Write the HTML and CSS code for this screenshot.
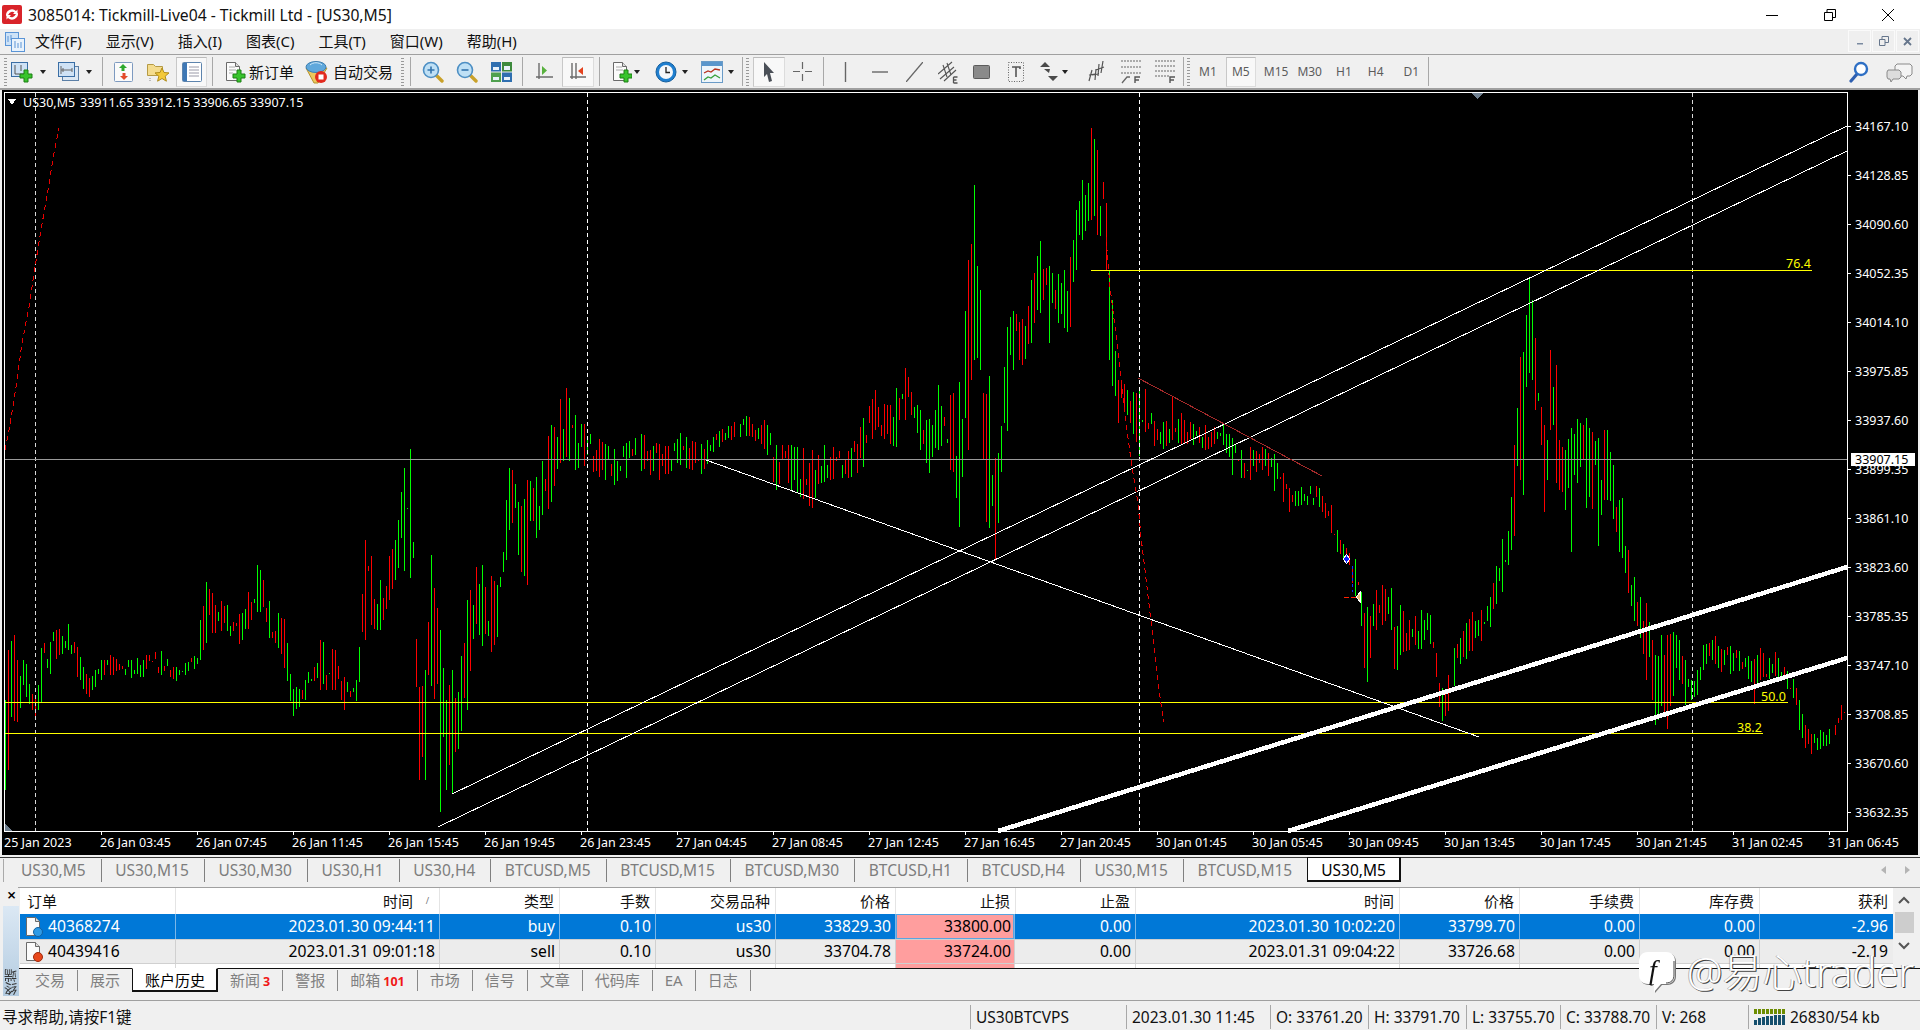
FILE: index.html
```html
<!DOCTYPE html>
<html lang="zh-CN">
<head>
<meta charset="utf-8">
<title>3085014: Tickmill-Live04 - Tickmill Ltd - [US30,M5]</title>
<link rel="stylesheet" href="styles.css">
</head>
<body>
<svg class="defs" width="0" height="0"><defs>
<g id="plus"><path d="M13 9h4v4h4v4h-4v4h-4v-4H9v-4h4z" fill="#38c42c" stroke="#1c7f14"/></g>
<g id="doc"><path d="M2.5 1.5h9l4 4v14h-13z" fill="#fbfbfb" stroke="#6a6a6a"/><path d="M11.5 1.5v4h4" fill="#ddd" stroke="#6a6a6a"/></g>
<g id="lens"><path d="M14 14l6 6" stroke="#c9a12a" stroke-width="3.4" stroke-linecap="round"/><circle cx="9" cy="9" r="7.5" fill="#bfe0f5" stroke="#4d8fc4" stroke-width="1.6"/></g>
</defs></svg>

<div class="app">
  <header class="title">
    <svg class="logo" width="20" height="19" viewBox="0 0 20 19"><rect width="20" height="19" rx="2" fill="#d9242a"/><path d="M4 11a6 6 0 0 1 10-5l1.500-1.500V9h-4.500l1.500-1.500a4 4 0 0 0-6 2zM16 8a6 6 0 0 1-10 5l-1.500 1.500V10H9l-1.500 1.500a4 4 0 0 0 6-2z" fill="#fff"/></svg>
    <span class="title-text">3085014: Tickmill-Live04 - Tickmill Ltd - [US30,M5]</span>
    <span class="win-btns">
      <svg width="12" height="12" viewBox="0 0 12 12"><path d="M0 6.500h12" stroke="#000"/></svg>
      <svg width="12" height="12" viewBox="0 0 12 12"><path d="M.5 3.500h8v8h-8zM3 3.500V.5h8.500v8H9" fill="none" stroke="#000"/></svg>
      <svg width="12" height="12" viewBox="0 0 12 12"><path d="M0 0l12 12M12 0L0 12" stroke="#000"/></svg>
    </span>
  </header>

  <nav class="menu">
    <svg class="mdi-ic" width="20" height="20" viewBox="0 0 20 20"><rect x=".5" y=".5" width="13" height="13" fill="#cde2f7" stroke="#5a94d6"/><rect x="6.500" y="6.500" width="13" height="13" fill="#e8f2fc" stroke="#5a94d6"/><path d="M3 4v6M6 3v5M10 9v7M13 11v5M16 10v6" stroke="#5a94d6"/></svg>
    <span class="menu-list">
      <span>文件(F)</span><span>显示(V)</span><span>插入(I)</span><span>图表(C)</span><span>工具(T)</span><span>窗口(W)</span><span>帮助(H)</span>
    </span>
    <span class="mdi-btns">
      <span class="mdi-btn"><svg width="8" height="8" viewBox="0 0 8 8"><path d="M1 6h6v1.500H1z" fill="#7a8aa0"/></svg></span>
      <span class="mdi-btn"><svg width="10" height="10" viewBox="0 0 10 10"><path d="M.5 3.500h5.500v6H.5zM3 3V.5h6.500v6H6" fill="none" stroke="#66768c"/></svg></span>
      <span class="mdi-btn"><svg width="9" height="9" viewBox="0 0 9 9"><path d="M1 1l7 7M8 1L1 8" stroke="#66768c" stroke-width="1.800"/></svg></span>
    </span>
  </nav>

  <div class="toolbar">
    <i class="grip m4"></i>
    <svg class="m4" width="22" height="22" viewBox="0 0 22 22"><rect x=".5" y="1.500" width="16" height="14" fill="#cfe2f5" stroke="#3a6ea5"/><path d="M4 4v9h10M10 4v6" fill="none" stroke="#555"/><use href="#plus"/></svg>
    <i class="drop m7"></i>
    <svg class="m12" width="22" height="22" viewBox="0 0 22 22"><rect x="4.500" y="5.500" width="16" height="14" fill="#dbe7f3" stroke="#5b7fa6"/><rect x=".5" y="1.500" width="16" height="14" fill="#cfe2f5" stroke="#3a6ea5"/><path d="M3 5v8M3 9h11M14 7v4M5 7v4" fill="none" stroke="#666"/></svg>
    <i class="drop m6"></i>
    <i class="vsep m10"></i>
    <svg class="m10" width="22" height="22" viewBox="0 0 22 22"><rect x="1.500" y="1.500" width="18" height="19" rx="1" fill="#fafafa" stroke="#7d9ac0"/><path d="M10 3l4 4h-2.500v3h-3V7H6z" fill="#2ea92e"/><path d="M11 19l-4-4h2.500v-3h3v3H15z" fill="#e24a2a"/></svg>
    <svg class="m11" width="23" height="22" viewBox="0 0 23 22"><path d="M1.500 3.500h6l2 2h7v9h-15z" fill="#f4dc8e" stroke="#b59a45"/><path d="M16 7l2 4.500 5 .4-3.800 3.300 1.200 5-4.400-2.700-4.400 2.700 1.200-5L9 11.900l5-.4z" fill="#f3c93a" stroke="#b08d1c"/><path d="M4 17v4" stroke="#888" stroke-dasharray="1 1"/></svg>
    <span class="pressed w31 m7"><svg width="20" height="22" viewBox="0 0 20 22"><rect x=".5" y="1.500" width="19" height="19" rx="1" fill="#fff" stroke="#5d84ad"/><rect x="1" y="2" width="4" height="18" fill="#3f78b5"/><path d="M7 6h10M7 9h10M7 12h10M7 15h10" stroke="#9a9aa8"/></svg></span>
    <i class="vsep m5"></i>
    <svg class="m11" width="22" height="22" viewBox="0 0 22 22"><use href="#doc"/><path d="M5 6h6M5 9h7M5 12h4" stroke="#aaa"/><use href="#plus"/></svg>
    <span class="tb-text tb-order">新订单</span>
    <svg class="m11" width="23" height="24" viewBox="0 0 23 24"><path d="M1 8l8 15h4l9-15z" fill="#ecc85c" stroke="#b59330"/><ellipse cx="11" cy="7" rx="10" ry="5.500" fill="#5fa8dc" stroke="#3f7fb0"/><path d="M5 5c3-3 9-3 12 0" stroke="#cfe8f8" fill="none"/><circle cx="16" cy="17" r="6" fill="#e22a1e"/><rect x="13.500" y="14.500" width="5" height="5" fill="#fff"/></svg>
    <span class="tb-text tb-auto">自动交易</span>
    <i class="grip m9"></i>
    <i class="vsep m6"></i>
    <svg class="m11" width="23" height="22" viewBox="0 0 23 22"><use href="#lens"/><path d="M5.500 9h7M9 5.500v7" stroke="#3474ad" stroke-width="1.600"/></svg>
    <svg class="m11" width="22" height="22" viewBox="0 0 22 22"><use href="#lens"/><path d="M5.500 9h7" stroke="#3474ad" stroke-width="1.600"/></svg>
    <svg class="m13" width="21" height="20" viewBox="0 0 21 20"><rect x="0" y="0" width="10" height="9.500" fill="#2f6fb0"/><rect x="11" y="0" width="10" height="9.500" fill="#3d8a3d"/><rect x="0" y="10.500" width="10" height="9.500" fill="#4fa04f"/><rect x="11" y="10.500" width="10" height="9.500" fill="#2f6fb0"/><path d="M2 5h6v3H2zM13 4h6v4h-6zM2 15h6v3H2zM13 15h6v3h-6z" fill="#e8f2fa"/></svg>
    <i class="vsep m10"></i>
    <svg class="m12" width="19" height="20" viewBox="0 0 19 20"><path d="M4 1v16M1 15h17" stroke="#6b6b6b" stroke-width="1.400" fill="none"/><path d="M7 4l5 4.500L7 13z" fill="#58b13e"/></svg>
    <span class="pressed w32 m8"><svg width="18" height="20" viewBox="0 0 18 20"><path d="M3 1v16M1 15h16M7 1v16" stroke="#6b6b6b" stroke-width="1.400" fill="none"/><path d="M14 5l-5 4 5 4z" fill="#e3421e"/></svg></span>
    <i class="vsep m5"></i>
    <svg class="m11" width="21" height="22" viewBox="0 0 21 22"><use href="#doc"/><path d="M5 6h6M5 9h7" stroke="#aaa"/><use href="#plus"/></svg>
    <i class="drop m2"></i>
    <svg class="m15" width="22" height="22" viewBox="0 0 22 22"><circle cx="11" cy="11" r="10" fill="#1f7fd0" stroke="#155f9e"/><circle cx="11" cy="11" r="7" fill="#f5f8fb"/><path d="M11 6v5.500h4" fill="none" stroke="#222" stroke-width="1.300"/></svg>
    <i class="drop m5"></i>
    <svg class="m13" width="22" height="22" viewBox="0 0 22 22"><rect x=".5" y=".5" width="21" height="21" fill="#eef5fb" stroke="#6a9bc7"/><rect x="1" y="1" width="20" height="4" fill="#5a96cc"/><path d="M3 12l4-2 3 1 4-3 5 1" fill="none" stroke="#b8321e" stroke-width="1.300"/><path d="M3 19l4-3 3 1 4-3 5 3" fill="none" stroke="#37a03a" stroke-width="1.300"/></svg>
    <i class="drop m5"></i>
    <i class="vsep m8"></i>
    <i class="grip m3"></i>
    <span class="pressed w32 m4"><svg width="12" height="22" viewBox="0 0 12 22"><path d="M1 1l10 11H7l2 8-3 1-2-8-3 3z" fill="#4a4f57"/></svg></span>
    <svg class="m8" width="19" height="19" viewBox="0 0 19 19"><path d="M9.500 0v7M9.500 12v7M0 9.500h7M12 9.500h7" stroke="#666" stroke-width="1.200"/></svg>
    <i class="vsep m11"></i>
    <svg class="m20" width="3" height="20" viewBox="0 0 3 20"><path d="M1.500 0v20" stroke="#666" stroke-width="1.400"/></svg>
    <svg class="m25" width="16" height="20" viewBox="0 0 16 20"><path d="M0 10h16" stroke="#666" stroke-width="1.400"/></svg>
    <svg class="m18" width="17" height="20" viewBox="0 0 17 20"><path d="M0 20L17 0" stroke="#666" stroke-width="1.400"/></svg>
    <svg class="m15" width="20" height="24" viewBox="0 0 20 24"><path d="M0 14L14 2M2 19L16 7M6 21L18 10M5 5l4 12M9 3l4 12" stroke="#555" stroke-width="1.100" fill="none"/><path d="M15.500 17h4M15.500 20h3M15.500 23h4M15.500 17v6" stroke="#555" stroke-width="1.300" fill="none"/></svg>
    <svg class="m15" width="17" height="14" viewBox="0 0 17 14"><rect x=".5" y=".5" width="16" height="13" rx="1" fill="#8a8a8a" stroke="#5c5c5c"/></svg>
    <svg class="m18" width="16" height="20" viewBox="0 0 16 20"><rect x=".5" y=".5" width="15" height="19" fill="none" stroke="#666" stroke-dasharray="1 1.500"/><path d="M4 5h8v2M8 5v10" fill="none" stroke="#555" stroke-width="1.600"/></svg>
    <svg class="m16" width="18" height="20" viewBox="0 0 18 20"><path d="M5 0l5 5H0zM4 7l5 4 1-4M13 19l-5-5h10z" fill="#4a4a4a"/></svg>
    <i class="drop m4"></i>
    <svg class="m20" width="17" height="22" viewBox="0 0 17 22"><path d="M1 20L4 9M1 14l6-1M7 19l1-11M4 14l7-1M10 15l1-12M8 9l8-3M13 12l2-12" stroke="#555" stroke-width="1.200" fill="none"/></svg>
    <svg class="m16" width="20" height="24" viewBox="0 0 20 24"><path d="M0 1h20M0 7h20M0 13h20" stroke="#666" stroke-dasharray="2 1"/><path d="M1 23l5-6h3" stroke="#666" fill="none" stroke-width="1.300"/><path d="M14 23v-6h5M14 20h4" stroke="#555" fill="none" stroke-width="1.400"/></svg>
    <svg class="m14" width="20" height="24" viewBox="0 0 20 24"><path d="M0 1h20M0 6h20M0 11h20M0 16h14" stroke="#666" stroke-dasharray="2 1"/><path d="M15 23v-6h5M15 20h4" stroke="#555" fill="none" stroke-width="1.400"/></svg>
    <i class="vsep m8"></i>
    <i class="grip m3"></i>
    <span class="period m9">M1</span>
    <span class="pressed period w30 m9">M5</span>
    <span class="period m8">M15</span>
    <span class="period m9">M30</span>
    <span class="period m14">H1</span>
    <span class="period m16">H4</span>
    <span class="period m20">D1</span>
    <i class="vsep m9"></i>
    <span class="tb-right">
      <svg width="20" height="22" viewBox="0 0 20 22"><path d="M8 13l-6 7" stroke="#2e5fb0" stroke-width="3.200" stroke-linecap="round"/><circle cx="12" cy="8" r="6" fill="#fff" stroke="#2e6fc4" stroke-width="2.400"/></svg>
      <svg width="27" height="22" viewBox="0 0 27 22"><path d="M11 3h13l2 2v8l-2 2h-3l-1 3-3-3h-6l-2-2V5z" fill="#f4f4f4" stroke="#8a8a8a"/><path d="M2 9h11l2 2v5l-2 2H7l-2 3-1-3H2l-1-2v-5z" fill="#ddd" stroke="#8a8a8a"/></svg>
    </span>
  </div>

  <main class="chart">
    <svg class="chart-svg" width="1920" height="765" viewBox="0 90 1920 765">
      <path id="bars-up" class="bar-up"/>
      <path id="bars-down" class="bar-down"/>
      <path class="vgrid thin" d="M35.500 93V831M1692.500 93V831"/>
      <path class="vgrid" d="M587.500 93V831M1139.500 93V831"/>
      <path class="price-line" d="M4 459.500H1847"/>
      <path class="fib" d="M1091 270.500H1812M4 702.500H1788M4 733.500H1763"/>
      <path class="thin-line" d="M452 794L1847 126M438 827L1847 151M706 460L1479 737"/>
      <path class="thick-line" d="M998 831L1847 567M1288 831L1847 658"/>
      <path class="dim-red" d="M1138 378L1322 476"/>
      <path class="red-dash" d="M5 450L9.600 427 16 387 22 343 29 307 35 267 41 230 48 190 54 153 59 128"/>
      <path class="red-dash" d="M1106 237L1110 287 1115 327 1119 360 1126.500 427 1132 467 1138 503 1141 537 1147 587 1154 647 1160 697 1163.500 722"/>
      <path class="blue-dash" d="M1352.500 566V592"/>
      <path class="red-short" d="M1344 597.500H1357"/>
      <path class="mark-blue" d="M1343 559l3.500-4.500 3.500 4.500-3.500 4.500z"/>
      <path class="mark-orange" d="M1356 597l4.500-5v10z"/>
      <path class="frame" d="M4.500 92.500H1847.500V831.500H4.500Z"/>
      <path class="ticks" d="M1847 126h4M1847 175h4M1847 224h4M1847 273h4M1847 322h4M1847 371h4M1847 420h4M1847 469h4M1847 518h4M1847 567h4M1847 616h4M1847 665h4M1847 714h4M1847 763h4M1847 812h4M101.500 831v4M197.500 831v4M293.500 831v4M389.500 831v4M485.500 831v4M581.500 831v4M677.500 831v4M773.500 831v4M869.500 831v4M965.500 831v4M1061.500 831v4M1157.500 831v4M1253.500 831v4M1349.500 831v4M1445.500 831v4M1541.500 831v4M1637.500 831v4M1733.500 831v4M1829.500 831v4"/>
      <path class="tri-top" d="M1472 93h11l-5.500 6z"/>
      <path class="tri-left" d="M5 823l7 8H5z"/>
      <path class="legend-tri" d="M8 99h8l-4 6z"/>
      <text class="axis" x="23" y="106.500">US30,M5</text>
      <text class="axis" x="80" y="106.500">33911.65 33912.15 33906.65 33907.15</text>
      <text class="fib-text" x="1786" y="268">76.4</text>
      <text class="fib-text" x="1761" y="701">50.0</text>
      <text class="fib-text" x="1737" y="732">38.2</text>
      <g class="axis">
        <text x="1855" y="130.500">34167.10</text><text x="1855" y="179.500">34128.85</text><text x="1855" y="228.500">34090.60</text><text x="1855" y="277.500">34052.35</text><text x="1855" y="326.500">34014.10</text><text x="1855" y="375.500">33975.85</text><text x="1855" y="424.500">33937.60</text><text x="1855" y="473.500">33899.35</text><text x="1855" y="522.500">33861.10</text><text x="1855" y="571.500">33823.60</text><text x="1855" y="620.500">33785.35</text><text x="1855" y="669.500">33747.10</text><text x="1855" y="718.500">33708.85</text><text x="1855" y="767.500">33670.60</text><text x="1855" y="816.500">33632.35</text>
      </g>
      <rect class="cur-box" x="1851" y="453" width="64" height="13"/>
      <text class="axis cur-text" x="1855" y="464">33907.15</text>
      <g class="axis">
        <text x="4" y="847">25 Jan 2023</text><text x="100" y="847">26 Jan 03:45</text><text x="196" y="847">26 Jan 07:45</text><text x="292" y="847">26 Jan 11:45</text><text x="388" y="847">26 Jan 15:45</text><text x="484" y="847">26 Jan 19:45</text><text x="580" y="847">26 Jan 23:45</text><text x="676" y="847">27 Jan 04:45</text><text x="772" y="847">27 Jan 08:45</text><text x="868" y="847">27 Jan 12:45</text><text x="964" y="847">27 Jan 16:45</text><text x="1060" y="847">27 Jan 20:45</text><text x="1156" y="847">30 Jan 01:45</text><text x="1252" y="847">30 Jan 05:45</text><text x="1348" y="847">30 Jan 09:45</text><text x="1444" y="847">30 Jan 13:45</text><text x="1540" y="847">30 Jan 17:45</text><text x="1636" y="847">30 Jan 21:45</text><text x="1732" y="847">31 Jan 02:45</text><text x="1828" y="847">31 Jan 06:45</text>
      </g>
    </svg>
  </main>

  <div class="chart-tabs">
    <span class="ctab first">US30,M5</span><span class="ctab">US30,M15</span><span class="ctab">US30,M30</span><span class="ctab">US30,H1</span><span class="ctab">US30,H4</span><span class="ctab">BTCUSD,M5</span><span class="ctab">BTCUSD,M15</span><span class="ctab">BTCUSD,M30</span><span class="ctab">BTCUSD,H1</span><span class="ctab">BTCUSD,H4</span><span class="ctab">US30,M15</span><span class="ctab no-sep">BTCUSD,M15</span><span class="ctab active">US30,M5</span>
    <span class="tab-nav"><i class="nav-l"></i><i class="nav-r"></i></span>
  </div>

  <section class="terminal">
    <aside class="term-side">
      <span class="term-close">×</span>
      <span class="term-label"><span>终端</span></span>
    </aside>
    <div class="term-main">
      <div class="term-top">
        <div class="grid-wrap">
          <div class="row head">
            <span class="left">订单</span><span class="sort">时间<small>/</small></span><span>类型</span><span>手数</span><span>交易品种</span><span>价格</span><span>止损</span><span>止盈</span><span>时间</span><span>价格</span><span>手续费</span><span>库存费</span><span class="last">获利</span>
          </div>
          <div class="row sel">
            <span class="left order"><svg width="19" height="21" viewBox="0 0 19 21"><use href="#doc"/><circle cx="14" cy="16" r="4.500" fill="#2e9be6" stroke="#14609e"/></svg>40368274</span><span>2023.01.30 09:44:11</span><span>buy</span><span>0.10</span><span>us30</span><span>33829.30</span><span class="sl">33800.00</span><span>0.00</span><span>2023.01.30 10:02:20</span><span>33799.70</span><span>0.00</span><span>0.00</span><span class="last">-2.96</span>
          </div>
          <div class="row alt">
            <span class="left order"><svg width="19" height="21" viewBox="0 0 19 21"><use href="#doc"/><circle cx="14" cy="16" r="4.500" fill="#e8481c" stroke="#a02a0c"/></svg>40439416</span><span>2023.01.31 09:01:18</span><span>sell</span><span>0.10</span><span>us30</span><span>33704.78</span><span class="sl">33724.00</span><span>0.00</span><span>2023.01.31 09:04:22</span><span>33726.68</span><span>0.00</span><span>0.00</span><span class="last">-2.19</span>
          </div>
          <div class="row stub">
            <span></span><span></span><span></span><span></span><span></span><span></span><span class="sl"></span><span></span><span></span><span></span><span></span><span></span><span class="last"></span>
          </div>
        </div>
        <div class="scroll">
          <svg width="14" height="9" viewBox="0 0 14 9"><path d="M2 7l5-5 5 5" fill="none" stroke="#555" stroke-width="2"/></svg>
          <i class="thumb"></i>
          <svg width="14" height="9" viewBox="0 0 14 9"><path d="M2 2l5 5 5-5" fill="none" stroke="#555" stroke-width="2"/></svg>
        </div>
      </div>
      <div class="term-tabs">
        <span class="ttab first">交易</span><span class="ttab no-sep">展示</span><span class="ttab active">账户历史</span><span class="ttab">新闻<b>3</b></span><span class="ttab">警报</span><span class="ttab">邮箱<b>101</b></span><span class="ttab">市场</span><span class="ttab">信号</span><span class="ttab">文章</span><span class="ttab">代码库</span><span class="ttab">EA</span><span class="ttab">日志</span>
      </div>
    </div>
  </section>

  <footer class="status">
    <span class="st s1">寻求帮助,请按F1键</span>
    <span class="st s2">US30BTCVPS</span>
    <span class="st s3">2023.01.30 11:45</span>
    <span class="st s4">O: 33761.20</span>
    <span class="st s5">H: 33791.70</span>
    <span class="st s6">L: 33755.70</span>
    <span class="st s7">C: 33788.70</span>
    <span class="st s8">V: 268</span>
    <span class="st s9"><svg width="32" height="17" viewBox="0 0 32 17"><path d="M1.500 6V1M5.500 6V1M9.500 6V1M13.500 6V1M17.500 6V1M21.500 6V1M25.500 6V1M29.500 6V1" stroke="#6c8c00" stroke-width="3"/><path d="M1.500 17V12M5.500 17V10M9.500 17V9M13.500 17V8M17.500 17V8M21.500 17V7M25.500 17V7M29.500 17V7" stroke="#16506e" stroke-width="3"/></svg>26830/54 kb</span>
  </footer>

  <div class="watermark">
    <svg class="wm-logo" width="38" height="42" viewBox="0 0 38 42"><path d="M10 1h18c6 0 9 4 9 9v14c0 6-4 9-9 9h-5l-7 8v-8h-6C4 33 1 29 1 24V10C1 5 4 1 10 1z" fill="#fff"/><path d="M36 10v14c0 5-3 8-8 8" fill="none" stroke="#444"/><text class="wm-f" x="11" y="28">f</text></svg>
    <span class="wm-text">@易心trader</span>
  </div>
</div>
<script src="chart.js"></script>
</body>
</html>
```
FILE: styles.css
```css
* { box-sizing: border-box; }
html, body { margin: 0; padding: 0; }
body {
  width: 1920px; height: 1030px; overflow: hidden; background: #f0f0f0; color: #000;
  font-family: "Noto Sans", "Noto Sans CJK SC", sans-serif; font-size: 15px;
}
.defs { position: absolute; }
.app { position: relative; width: 1920px; height: 1030px; display: flex; flex-direction: column; }
svg { display: block; flex: none; }

/* title */
.title { height: 29px; background: #fff; display: flex; align-items: center; padding-left: 2px; }
.title-text { margin-left: 6px; font-size: 15.700px; color: #111; }
.win-btns { margin-left: auto; display: flex; gap: 46px; padding-right: 26px; }

/* menu */
.menu { height: 26px; background: #efefef; border-bottom: 1px solid #a0a0a0; display: flex; align-items: center; padding-left: 5px; }
.mdi-ic { margin-top: 1px; }
.menu-list { margin-left: 10px; margin-top: -3px; display: flex; gap: 24px; font-size: 15px; color: #111; }
.mdi-btns { margin-left: auto; display: flex; gap: 1px; padding-right: 1px; align-self: flex-start; margin-top: 1px; }
.mdi-btn { width: 23px; height: 22px; border: 1px solid #fafafa; display: flex; align-items: center; justify-content: center; }

/* toolbar */
.toolbar { height: 35px; background: #f0f0f0; border-bottom: 2px solid #a0a0a0; display: flex; align-items: center; }
.toolbar > * { flex: none; }
.grip { width: 3px; height: 28px; background: repeating-linear-gradient(#999 0 1px, transparent 1px 3px); display: block; }
.vsep { width: 1px; height: 29px; background: #a8a8a8; display: block; }
.drop { width: 0; height: 0; border-left: 3.500px solid transparent; border-right: 3.500px solid transparent; border-top: 4px solid #222; display: block; }
.pressed { height: 30px; background: #f8f8f8; border: 1px solid #dcdcdc; border-top-color: #bbb; border-left-color: #c8c8c8; display: flex; align-items: center; justify-content: center; }
.w30 { width: 30px; } .w31 { width: 31px; } .w32 { width: 32px; }
.m2 { margin-left: 2px; } .m3 { margin-left: 3px; } .m4 { margin-left: 4px; } .m5 { margin-left: 5px; } .m6 { margin-left: 6px; }
.m7 { margin-left: 7px; } .m8 { margin-left: 8px; } .m9 { margin-left: 9px; } .m10 { margin-left: 10px; } .m11 { margin-left: 11px; }
.m12 { margin-left: 12px; } .m13 { margin-left: 13px; } .m14 { margin-left: 14px; } .m15 { margin-left: 15px; } .m16 { margin-left: 16px; }
.m18 { margin-left: 18px; } .m19 { margin-left: 19px; } .m20 { margin-left: 20px; } .m25 { margin-left: 25px; }
.tb-text { font-size: 15px; color: #111; white-space: nowrap; }
.tb-order { margin-left: 3px; width: 45px; }
.tb-auto { margin-left: 5px; width: 59px; }
.period { font-size: 12px; color: #5c5c5c; }
.tb-right { margin-left: auto; display: flex; gap: 17px; padding-right: 7px; }

/* chart */
.chart { height: 765px; background: #000; margin-left: 2px; margin-right: 2px; overflow: hidden; }
.chart-svg { margin-left: -2px; }
.chart-svg path { fill: none; shape-rendering: crispEdges; }
.bar-up { stroke: #00ff00; stroke-width: 1; }
.bar-down { stroke: #ff0000; stroke-width: 1; }
.vgrid { stroke: #fff; stroke-dasharray: 4 3; }
.vgrid.thin { stroke: #d8d8d8; }
.price-line { stroke: #9a9a9a; }
.fib { stroke: #ffff00; }
.thin-line { stroke: #fff; }
.thick-line { stroke: #fff; stroke-width: 4.500; }
.dim-red { stroke: #a52a2a; }
.red-dash { stroke: #e80000; stroke-dasharray: 5 4; }
.blue-dash { stroke: #1030ff; stroke-dasharray: 3 3; }
.red-short { stroke: #ff2000; stroke-dasharray: 5 2; }
.chart-svg .mark-blue { fill: #1020ff; stroke: #fff; }
.chart-svg .mark-orange { fill: #f0c080; stroke: #fff; }
.frame { stroke: #fff; }
.ticks { stroke: #fff; }
.chart-svg .tri-top { fill: #708090; }
.chart-svg .tri-left { fill: #708090; }
.chart-svg .legend-tri { fill: #fff; }
.axis { fill: #fff; font-size: 12.500px; font-family: "Noto Sans", sans-serif; }
.fib-text { fill: #ffff00; font-size: 12.500px; font-family: "Noto Sans", sans-serif; }
.cur-box { fill: #fff; }
.axis.cur-text { fill: #000; }

/* chart tabs */
.chart-tabs { height: 30px; margin-top: 2px; border-top: 1px solid #3a3a3a; display: flex; align-items: flex-start; padding-left: 3px; }
.ctab { height: 23px; margin-top: 1px; padding: 0 15px 0 13.600px; font-size: 15.500px; line-height: 23px; color: #7d7d7d; border-right: 1px solid #808080; white-space: nowrap; }
.ctab.first { padding-left: 17px; border-left: 1px solid #aaa; }
.ctab.no-sep { border-right: 0; }
.ctab.active { background: #fff; color: #000; margin-top: -1px; height: 25px; border: 1px solid #111; border-top-color: #111; border-right-width: 2px; border-bottom-width: 2px; padding: 0 13px; line-height: 24px; }
.tab-nav { margin-left: auto; display: flex; gap: 19px; padding: 8px 10px 0 0; }
.nav-l, .nav-r { width: 0; height: 0; border-top: 4px solid transparent; border-bottom: 4px solid transparent; display: block; }
.nav-l { border-right: 5px solid #b4b4b4; }
.nav-r { border-left: 5px solid #b4b4b4; }

/* terminal */
.terminal { height: 114px; display: flex; border-bottom: 1px solid #a0a0a0; }
.term-side { width: 20px; padding-left: 3px; display: flex; flex-direction: column; }
.term-close { height: 18px; text-align: center; font-size: 16px; line-height: 14px; margin-top: 1px; font-weight: 600; }
.term-label { flex: none; height: 90px; width: 16px; background: linear-gradient(#dbe8f4, #b3cbe0); display: flex; align-items: flex-end; justify-content: center; }
.term-label span { writing-mode: vertical-rl; transform: rotate(180deg); font-size: 13px; line-height: 15px; color: #333; margin-bottom: 1px; }
.term-main { flex: 1; min-width: 0; display: flex; flex-direction: column; }
.term-top { height: 81px; display: flex; border-top: 1px solid #a0a0a0; margin-left: -2px; padding-left: 2px; overflow: hidden; }
.grid-wrap { width: 1873px; flex: none; background: #fff; }
.row { display: grid; grid-template-columns: 156px 264px 120px 96px 120px 120px 120px 120px 264px 120px 120px 120px 133px; font-size: 15.700px; }
.row > span { text-align: right; padding-right: 4px; white-space: nowrap; border-right: 1px solid #d8d8d8; line-height: 25px; height: 100%; }
.row > .left { text-align: left; }
.row > .last { padding-right: 5px; border-right: 0; }
.head { height: 26px; }
.head > span { font-size: 15px; line-height: 26px; padding-right: 5px; border-right-color: #e4e4e4; color: #111; }
.head > .left { padding-left: 7px; }
.head > .sort { padding-right: 26px; position: relative; }
.sort small { position: absolute; right: 10px; top: 0; font-size: 9px; color: #777; }
.row.sel { height: 25px; background: #0078d7; color: #fff; }
.row.sel > span { border-right-color: #7ab6e8; }
.row.alt { height: 25px; background: #ececec; border-top: 1px solid #d0d0d0; border-bottom: 1px solid #d0d0d0; }
.row.alt > span { line-height: 23px; border-right-color: #d0d0d0; }
.row.stub { height: 5px; }
.row .sl { background: #ff9e9e; color: #000; margin-right: 1px; padding-right: 3px; }
.row.sel .sl { box-shadow: inset 0 0 0 1px #5aa5e0; }
.order { display: flex; align-items: center; gap: 5px; padding-left: 4px; }
.scroll { width: 26px; flex: none; display: flex; flex-direction: column; align-items: center; padding-top: 8px; padding-right: 4px; }
.thumb { display: block; width: 19px; height: 21px; background: #cdcdcd; margin: 7px 0 8px; }
.term-tabs { height: 26px; flex: none; border-top: 1px solid #111; display: flex; align-items: flex-start; margin-left: -1px; }
.ttab { height: 21px; margin-top: 1px; padding: 0 12px; font-size: 15px; line-height: 21px; color: #808080; border-right: 1px solid #888; white-space: nowrap; }
.ttab.first { padding-left: 16px; }
.ttab.no-sep { border-right: 0; }
.ttab.active { background: #fff; color: #000; height: 24px; margin-top: -1px; padding: 0 12px; border: 1px solid #111; border-top-color: transparent; border-right-width: 2px; border-bottom-width: 2px; line-height: 22px; width: 86px; }
.ttab b { color: #f01818; font-size: 12.500px; margin-left: 3px; font-weight: 700; }

/* status */
.status { flex: 1; background: #f0f0f0; display: flex; align-items: center; padding-top: 2px; font-size: 15.500px; }
.st { height: 24px; line-height: 24px; white-space: nowrap; padding-left: 5px; border-left: 1px solid #a8a8a8; color: #111; display: flex; align-items: center; flex: none; }
.s1 { width: 970px; border-left: 0; padding-left: 2px; }
.s2 { width: 156px; }
.s3 { width: 144px; }
.s4 { width: 98px; }
.s5 { width: 98px; }
.s6 { width: 94px; }
.s7 { width: 96px; }
.s8 { width: 92px; }
.s9 { gap: 4px; flex: 1; }

/* watermark */
.watermark { position: absolute; left: 1638px; top: 950px; display: flex; align-items: center; gap: 11px; pointer-events: none; }
.wm-logo { filter: drop-shadow(1px 1px 0 #777); }
.wm-f { fill: #111; font: italic 400 28px "Liberation Serif", serif; }
.wm-text { font-family: "Noto Sans", "Noto Sans CJK SC", sans-serif; font-weight: 300; font-size: 40px; line-height: 44px; color: #fff; text-shadow: 1px 1px 0 #444, -1px 0 0 rgba(120,120,120,.5); white-space: nowrap; }
```
FILE: chart.js
```js
(function () {
  // Price history envelope: [x, high-y, low-y] in page pixels.
  var keys = [
  [5,700,790],[8,650,770],[13,627,720],[17,660,722],[25,660,695],[35,695,718],[42,640,700],[55,630,660],[68,624,650],[78,650,680],[88,680,698],[100,660,680],[110,655,675],[130,660,678],[160,650,675],[175,668,682],[195,655,668],[200,620,660],[207,576,640],[220,600,630],[240,615,645],[258,562,610],[270,605,640],[285,620,670],[292,690,717],[305,680,700],[320,640,690],[335,650,690],[345,680,712],[357,680,700],[365,540,640],[380,580,630],[395,540,580],[405,460,570],[411,447,580],[418,690,780],[425,670,780],[432,536,670],[440,630,812],[446,700,790],[452,670,794],[460,665,735],[467,600,710],[475,567,620],[483,565,650],[490,575,655],[497,585,637],[505,510,570],[510,458,520],[520,510,570],[527,480,585],[535,480,540],[550,428,505],[565,385,455],[575,415,470],[585,425,465],[600,440,478],[615,450,485],[640,433,470],[660,445,480],[680,433,465],[700,445,475],[720,430,445],[745,416,435],[765,420,450],[775,445,490],[790,445,490],[812,450,508],[825,445,480],[850,450,478],[862,420,470],[875,390,430],[885,405,440],[895,390,450],[905,368,420],[920,410,450],[930,420,475],[938,385,450],[950,395,470],[960,380,533],[968,260,450],[974,185,360],[980,290,370],[985,400,520],[990,370,530],[996,475,565],
  [1006,330,443],[1012,310,370],[1023,320,365],[1032,275,340],[1041,237,310],[1050,270,347],[1059,275,320],[1069,265,337],[1076,210,270],[1082,180,240],[1091,128,220],[1097,150,235],[1105,180,240],[1109,270,360],[1112,300,386],[1118,380,423],[1123,383,410],[1132,392,430],[1140,390,460],[1144,385,430],[1153,420,445],[1162,425,450],[1172,397,440],[1182,415,445],[1194,425,445],[1206,425,450],[1223,425,445],[1232,438,475],[1241,450,478],[1250,447,480],[1262,447,470],[1273,452,490],[1282,470,500],[1288,488,513],[1300,487,505],[1318,485,505],[1326,505,520],[1332,505,535],[1338,535,555],[1347,550,565],[1356,560,600],[1360,585,612],[1365,620,682],[1368,600,682],[1376,590,630],[1382,585,625],[1391,588,630],[1395,640,682],[1400,605,655],[1409,620,650],[1420,610,650],[1429,610,640],[1435,640,665],[1438,680,700],[1441,690,722],[1447,680,715],[1453,650,690],[1459,640,665],[1465,625,660],[1473,610,650],[1482,610,640],[1491,595,625],[1497,560,600],[1503,535,590],[1509,530,560],[1513,460,545],[1520,357,480],[1524,350,500],[1528,272,370],[1532,300,380],[1536,350,420],[1540,400,406],[1543,420,523],[1547,440,480],[1550,350,430],[1555,340,480],[1559,440,490],[1565,450,510],[1570,430,566],[1576,420,480],[1585,415,510],[1591,430,500],[1597,440,555],[1603,430,500],[1608,430,500],[1618,500,550],[1623,498,560],[1629,560,600],[1635,580,625],[1641,600,640],[1646,603,680],[1652,640,700],[1656,660,733],[1662,630,700],[1666,635,735],[1674,632,690],[1679,640,680],[1685,660,705],[1691,680,700],[1697,670,695],[1703,645,670],[1712,640,660],[1716,635,665],[1720,650,672],[1729,645,675],[1738,650,670],[1747,655,675],[1755,660,708],[1759,647,680],[1768,660,680],[1774,650,675],[1779,660,680],[1788,672,690],[1794,680,700],[1799,700,730],[1805,725,748],[1812,735,755],[1819,730,750],[1828,730,745],[1835,725,735],[1841,705,720],[1846,705,715]
  ];

  var seed = 20230130;
  function rnd() {
    seed = (seed + 0x6D2B79F5) | 0;
    var t = Math.imul(seed ^ (seed >>> 15), 1 | seed);
    t = (t + Math.imul(t ^ (t >>> 7), 61 | t)) ^ t;
    return ((t ^ (t >>> 14)) >>> 0) / 4294967296;
  }

  var up = "", down = "", k = 0;
  for (var x = 5; x <= 1846; x += 3) {
    while (k < keys.length - 2 && keys[k + 1][0] <= x) k++;
    var a = keys[k], b = keys[k + 1];
    var f = Math.min(1, Math.max(0, (x - a[0]) / (b[0] - a[0])));
    var hi = a[1] + (b[1] - a[1]) * f;
    var lo = a[2] + (b[2] - a[2]) * f;
    var span = lo - hi;
    var exact = Math.abs(x - a[0]) <= 1 || Math.abs(x - b[0]) <= 1;
    var r1 = rnd(), r2 = rnd();
    var barTop = exact ? hi : hi + span * r1 * r1 * 0.75;
    var barEnd = exact ? lo : lo - span * r2 * r2 * 0.75;
    var seg = "M" + (x + 0.5) + " " + Math.round(barTop) + "V" + Math.round(barEnd);
    var rising = b[1] < a[1];
    if (rnd() < (rising ? 0.62 : 0.42)) up += seg; else down += seg;
  }
  document.getElementById("bars-up").setAttribute("d", up);
  document.getElementById("bars-down").setAttribute("d", down);
})();
```
